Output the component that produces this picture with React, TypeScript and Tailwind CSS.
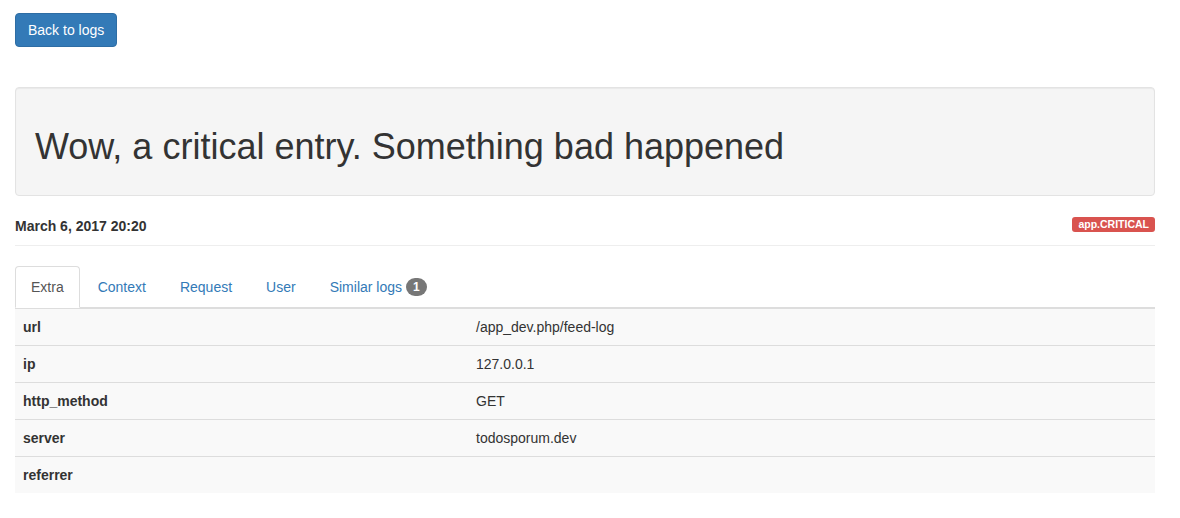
export default function App() {
  const rows: [string, string][] = [
    ['url', '/app_dev.php/feed-log'],
    ['ip', '127.0.0.1'],
    ['http_method', 'GET'],
    ['server', 'todosporum.dev'],
    ['referrer', ''],
  ];

  const tabs = ['Context', 'Request', 'User'];

  return (
    <div className="min-h-screen bg-white text-[14px] leading-[20px] text-[#333] font-['Liberation_Sans',Arial,sans-serif]">
      <div className="w-[1170px] px-[15px] pt-[13px]">
        <button className="h-[34px] rounded-[4px] border border-[#2e6da4] bg-[#337ab7] px-[12px] text-[14px] text-white">
          Back to logs
        </button>

        {/* heading well */}
        <div className="mt-[40px] rounded-[4px] border border-[#e3e3e3] bg-[#f5f5f5] px-[19px] py-[19px] shadow-[inset_0_1px_1px_rgba(0,0,0,0.05)]">
          <h1 className="mb-[10px] mt-[20px] text-[36px] leading-[39px] font-normal">
            Wow, a critical entry. Something bad happened
          </h1>
        </div>

        {/* date + level */}
        <div className="mt-[20px] flex items-center justify-between border-b border-[#eee] pb-[9px] h-[30px]">
          <span className="text-[14px] font-bold">March 6, 2017 20:20</span>
          <span className="mb-[3px] rounded-[3px] bg-[#d9534f] px-[6px] pb-[2px] pt-[1px] text-[10.5px] leading-[12px] font-bold text-white">
            app.CRITICAL
          </span>
        </div>

        {/* tabs */}
        <ul className="mt-[20px] flex border-b border-[#ddd]">
          <li className="-mb-px mr-[2px]">
            <span className="block rounded-t-[4px] border border-[#ddd] border-b-transparent bg-white px-[15px] py-[10px] text-[#555]">
              Extra
            </span>
          </li>
          {tabs.map((t) => (
            <li key={t} className="-mb-px mr-[2px]">
              <a className="block border border-transparent px-[15px] py-[10px] text-[#337ab7]">{t}</a>
            </li>
          ))}
          <li className="-mb-px mr-[2px]">
            <a className="flex items-center border border-transparent px-[15px] py-[10px] text-[#337ab7]">
              Similar logs
              <span className="ml-[4px] rounded-[10px] bg-[#777] px-[7px] text-[12px] leading-[18px] font-bold text-white">
                1
              </span>
            </a>
          </li>
        </ul>

        {/* data table */}
        <table className="w-full border-collapse">
          <tbody>
            {rows.map(([k, v]) => (
              <tr key={k} className="bg-[#f9f9f9]">
                <th className="w-[453px] border-t border-[#ddd] p-[8px] text-left font-bold">{k}</th>
                <td className="border-t border-[#ddd] p-[8px]">{v}</td>
              </tr>
            ))}
          </tbody>
        </table>
      </div>
    </div>
  );
}
